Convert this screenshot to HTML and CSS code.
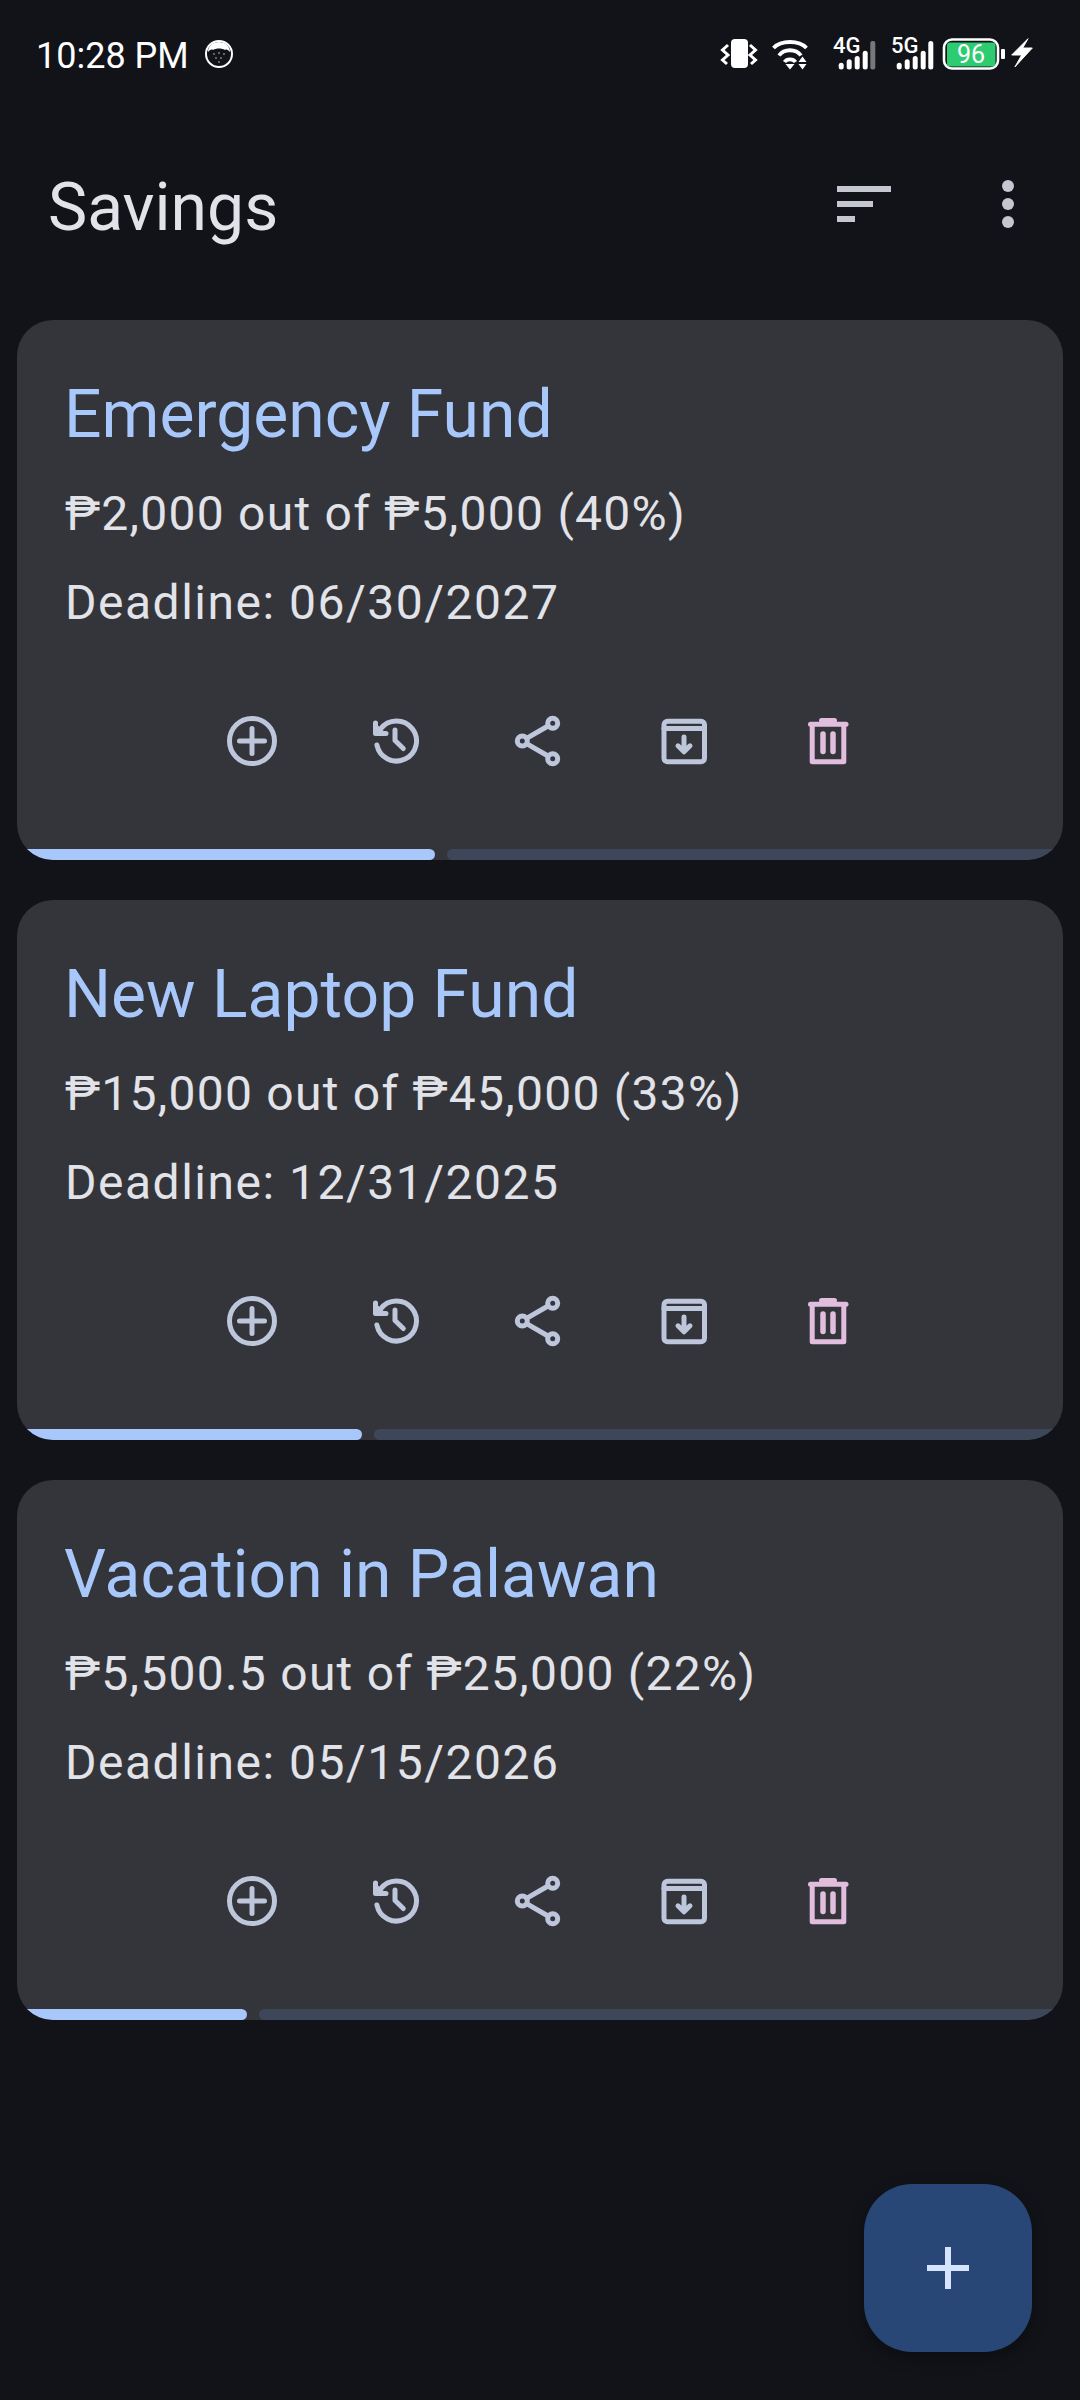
FILE: index.html
```html
<!DOCTYPE html>
<html lang="en">
<head>
    <meta charset="UTF-8">
    <meta name="viewport" content="width=device-width, initial-scale=1.0">
    <title>Savings</title>
    <link rel="stylesheet" href="styles.css">
</head>
<body>

<!-- icons used on every card -->
<svg class="icon-defs" aria-hidden="true">
    <symbol id="ic-add" viewBox="0 0 72 72">
        <circle cx="36" cy="36" r="22.5"/>
        <path d="M23.5 36H48.5M36 23.5V48.5"/>
    </symbol>
    <symbol id="ic-history" viewBox="0 0 72 72">
        <path d="M20.5 24A20 20 0 1 1 16.9 40"/>
        <path d="M15.5 18V28.5H26" class="fill-head"/>
        <path d="M35 25V35.5L43.3 43.5"/>
    </symbol>
    <symbol id="ic-share" viewBox="0 0 72 72">
        <circle cx="48.7" cy="18.3" r="5"/>
        <circle cx="18.3" cy="36" r="5"/>
        <circle cx="48.7" cy="53.7" r="5"/>
        <path d="M23 33.2L44 21M23 38.8L44 51"/>
    </symbol>
    <symbol id="ic-archive" viewBox="0 0 72 72">
        <rect x="16" y="16.3" width="40.5" height="40.5" rx="3.5"/>
        <path d="M16 23.6H56.5"/>
        <path d="M36 32V46.5M30 40.8L36 46.8L42 40.8"/>
    </symbol>
    <symbol id="ic-delete" viewBox="0 0 72 72">
        <path d="M18.5 19.2H54"/>
        <path d="M29.5 15.5H42.5"/>
        <path d="M20.2 19.5V56.8H51.8V19.5"/>
        <path d="M31 29V46.5M41 29V46.5" class="thick"/>
    </symbol>
    <symbol id="ic-signal" viewBox="0 0 43 32">
        <rect x="5.7" y="24.7" width="5" height="6.8" rx="2.5"/>
        <rect x="13.7" y="21.3" width="5" height="10.2" rx="2.5"/>
        <rect x="21.7" y="18" width="5" height="13.5" rx="2.5"/>
        <rect x="29.7" y="12.7" width="5" height="18.8" rx="2.5"/>
    </symbol>
</svg>

<div class="status-bar">
    <div class="status-left">
        <span class="status-time">10:28 PM</span>
        <svg class="face-icon" width="28" height="28" viewBox="0 0 28 28">
            <circle cx="14" cy="14" r="13" fill="#111318" stroke="#fff" stroke-width="2"/>
            <path d="M3 12C3 6 8 2 14 2S25 6 25 12C23 10 22 9 20 10C17 8 11 8 8 10C6 9 5 10 3 12Z" fill="#fff"/>
            <g fill="#c8c8c8">
                <circle cx="9" cy="14" r=".8"/><circle cx="14" cy="13" r=".8"/><circle cx="19" cy="14" r=".8"/>
                <circle cx="11" cy="18" r=".8"/><circle cx="16" cy="18" r=".8"/><circle cx="14" cy="22" r=".8"/>
            </g>
        </svg>
    </div>
    <div class="status-right">
        <svg class="st-vibrate" width="36" height="30" viewBox="0 0 36 30">
            <rect x="10" y="0" width="17" height="29" rx="4" fill="#fff"/>
            <path d="M7 6L1.5 11L7 16L1.5 21L6 25M29 6L34.5 11L29 16L34.5 21L30 25" fill="none" stroke="#fff" stroke-width="3"/>
        </svg>
        <svg class="st-wifi" width="36" height="30" viewBox="0 0 36 30">
            <g fill="none" stroke="#fff" stroke-width="3.8">
                <path d="M1.5 8C9 0 27 0 34.5 8"/>
                <path d="M7 15.5C12 8.5 24 8.5 29 15.5"/>
                <path d="M12.5 22C15 18.5 21 18.5 23.5 22"/>
            </g>
            <path d="M13.5 24H22.5L18 29.5ZM30.5 16.5L34.5 22H26.5ZM26.5 24H34.5L30.5 29.5Z" fill="#fff"/>
        </svg>
        <svg class="st-signal" width="43" height="32" viewBox="0 0 43 32">
            <text x="0" y="15" class="st-net">4G</text>
            <use href="#ic-signal" fill="#fff"/>
            <rect x="37.3" y="3" width="5" height="28.5" rx="2" fill="#77787b"/>
        </svg>
        <svg class="st-signal st-signal-2" width="43" height="32" viewBox="0 0 43 32">
            <text x="0" y="15" class="st-net">5G</text>
            <use href="#ic-signal" fill="#fff"/>
            <rect x="37.3" y="3" width="5" height="28.5" rx="2.5" fill="#fff"/>
        </svg>
        <svg class="st-battery" width="63" height="32" viewBox="0 0 63 32">
            <rect x="2" y="1.5" width="54" height="29" rx="8" fill="none" stroke="#fff" stroke-width="2.6"/>
            <rect x="5" y="4.5" width="48.5" height="24" rx="3" fill="#2ecc71"/>
            <text x="29" y="25" class="st-level">96</text>
            <rect x="59" y="11" width="4" height="10" rx="1" fill="#fff"/>
        </svg>
        <svg class="st-bolt" width="21" height="30" viewBox="0 0 21 30">
            <path d="M17 .7L.7 17H10.7L4 28.8L21.3 10H11.7Z" fill="#fff" stroke="#fff" stroke-width="1" stroke-linejoin="round"/>
        </svg>
    </div>
</div>

<header class="app-bar">
    <h1>Savings</h1>
    <div class="app-actions">
        <button class="icon-btn" aria-label="Sort">
            <svg width="72" height="72" viewBox="0 0 72 72"><path class="solid" d="M9 18H63V24H9ZM9 33H45V39H9ZM9 48H27V54H9Z"/></svg>
        </button>
        <button class="icon-btn" aria-label="More">
            <svg width="72" height="72" viewBox="0 0 72 72"><g class="solid"><circle cx="36" cy="18" r="6"/><circle cx="36" cy="36" r="6"/><circle cx="36" cy="54" r="6"/></g></svg>
        </button>
    </div>
</header>

<main class="goal-list">

    <section class="goal-card">
        <h2>Emergency Fund</h2>
        <p class="amount">₱2,000 out of ₱5,000 (40%)</p>
        <p class="deadline">Deadline: 06/30/2027</p>
        <div class="goal-actions">
            <button class="icon-btn"><svg class="line"><use href="#ic-add"/></svg></button>
            <button class="icon-btn"><svg class="line"><use href="#ic-history"/></svg></button>
            <button class="icon-btn"><svg class="line"><use href="#ic-share"/></svg></button>
            <button class="icon-btn"><svg class="line"><use href="#ic-archive"/></svg></button>
            <button class="icon-btn"><svg class="line danger"><use href="#ic-delete"/></svg></button>
        </div>
        <div class="progress">
            <div class="progress-fill" style="width: 40%"></div>
            <div class="progress-track"></div>
        </div>
    </section>

    <section class="goal-card">
        <h2>New Laptop Fund</h2>
        <p class="amount">₱15,000 out of ₱45,000 (33%)</p>
        <p class="deadline">Deadline: 12/31/2025</p>
        <div class="goal-actions">
            <button class="icon-btn"><svg class="line"><use href="#ic-add"/></svg></button>
            <button class="icon-btn"><svg class="line"><use href="#ic-history"/></svg></button>
            <button class="icon-btn"><svg class="line"><use href="#ic-share"/></svg></button>
            <button class="icon-btn"><svg class="line"><use href="#ic-archive"/></svg></button>
            <button class="icon-btn"><svg class="line danger"><use href="#ic-delete"/></svg></button>
        </div>
        <div class="progress">
            <div class="progress-fill" style="width: 33%"></div>
            <div class="progress-track"></div>
        </div>
    </section>

    <section class="goal-card">
        <h2>Vacation in Palawan</h2>
        <p class="amount">₱5,500.5 out of ₱25,000 (22%)</p>
        <p class="deadline">Deadline: 05/15/2026</p>
        <div class="goal-actions">
            <button class="icon-btn"><svg class="line"><use href="#ic-add"/></svg></button>
            <button class="icon-btn"><svg class="line"><use href="#ic-history"/></svg></button>
            <button class="icon-btn"><svg class="line"><use href="#ic-share"/></svg></button>
            <button class="icon-btn"><svg class="line"><use href="#ic-archive"/></svg></button>
            <button class="icon-btn"><svg class="line danger"><use href="#ic-delete"/></svg></button>
        </div>
        <div class="progress">
            <div class="progress-fill" style="width: 22%"></div>
            <div class="progress-track"></div>
        </div>
    </section>

</main>

<button class="fab" aria-label="Add">
    <svg width="42" height="42" viewBox="0 0 42 42"><path d="M18 0H24V18H42V24H24V42H18V24H0V18H18Z"/></svg>
</button>

</body>
</html>
```

FILE: styles.css
```css
* {
    box-sizing: border-box;
}

body {
    margin: 0;
    width: 1080px;
    height: 2400px;
    position: relative;
    overflow: hidden;
    background-color: #111318;
    color: #e2e2e9;
    font-family: Roboto, "Noto Sans", sans-serif;
}

.icon-defs {
    position: absolute;
    width: 0;
    height: 0;
}

/* status bar */
.status-bar {
    height: 108px;
    padding: 35px 48px 0 36px;
    display: flex;
    justify-content: space-between;
    align-items: flex-start;
}

.status-left {
    display: flex;
    align-items: flex-start;
}

.status-time {
    font-size: 36px;
    line-height: 42px;
    color: #ffffff;
}

.face-icon {
    margin: 5px 0 0 16px;
}

.status-right {
    display: flex;
    align-items: flex-start;
    margin-top: 3px;
}

.status-right svg {
    display: block;
    overflow: visible;
}

.st-vibrate {
    margin-top: 1px;
}

.st-wifi {
    margin: 2px 0 0 15px;
}

.st-signal {
    margin-left: 25px;
}

.st-signal-2 {
    margin-left: 15px;
}

.st-battery {
    margin-left: 8px;
}

.st-bolt {
    margin-left: 6px;
}

.st-net {
    font-size: 22px;
    font-weight: 500;
    fill: #ffffff;
}

.st-level {
    font-size: 25px;
    fill: #ffffff;
    text-anchor: middle;
}

/* top bar */
.app-bar {
    height: 192px;
    padding-left: 48px;
    display: flex;
    justify-content: space-between;
    align-items: center;
}

.app-bar h1 {
    margin: 7px 0 0;
    font-size: 66px;
    font-weight: 400;
    line-height: 84px;
}

.app-actions {
    display: flex;
}

.icon-btn {
    width: 144px;
    height: 144px;
    padding: 0;
    border: none;
    background: none;
    display: flex;
    justify-content: center;
    align-items: center;
}

.solid {
    fill: #c4c6d0;
}

/* cards */
.goal-list {
    padding: 20px 17px 0;
    display: flex;
    flex-direction: column;
    gap: 40px;
}

.goal-card {
    height: 540px;
    padding-top: 52.5px;
    background-color: #33353a;
    border-radius: 36px;
    overflow: hidden;
    display: flex;
    flex-direction: column;
}

.goal-card h2 {
    margin: 0 47px;
    font-size: 66px;
    font-weight: 400;
    line-height: 84px;
    color: #a8c7fa;
}

.amount,
.deadline {
    margin: 0 48px;
    font-size: 48px;
    line-height: 72px;
    letter-spacing: 1.5px;
}

.amount {
    margin-top: 21px;
    letter-spacing: 1.25px;
}

.deadline {
    margin-top: 17.5px;
}

.goal-actions {
    margin-top: 29.5px;
    display: flex;
    justify-content: center;
}

.line {
    width: 72px;
    height: 72px;
    fill: none;
    stroke: #bec6dc;
    stroke-width: 5;
    stroke-linecap: round;
    stroke-linejoin: round;
}

.line.danger {
    stroke: #e2bede;
}

.thick {
    stroke-width: 5.5;
}

.fill-head {
    fill: #bec6dc;
}

.progress {
    margin-top: auto;
    height: 11px;
    display: flex;
    gap: 12px;
}

.progress-fill {
    background-color: #a8c7fa;
    border-radius: 0 6px 6px 0;
}

.progress-track {
    flex: 1;
    background-color: #3e4759;
    border-radius: 6px 0 0 6px;
}

/* add button, floats over the list */
.fab {
    position: absolute;
    left: 864px;
    top: 2184px;
    width: 168px;
    height: 168px;
    padding: 0;
    border: none;
    border-radius: 48px;
    background-color: #284777;
    box-shadow: 0 6px 16px rgba(0, 0, 0, 0.3);
    display: flex;
    justify-content: center;
    align-items: center;
}

.fab svg {
    fill: #d6e3ff;
}
```
